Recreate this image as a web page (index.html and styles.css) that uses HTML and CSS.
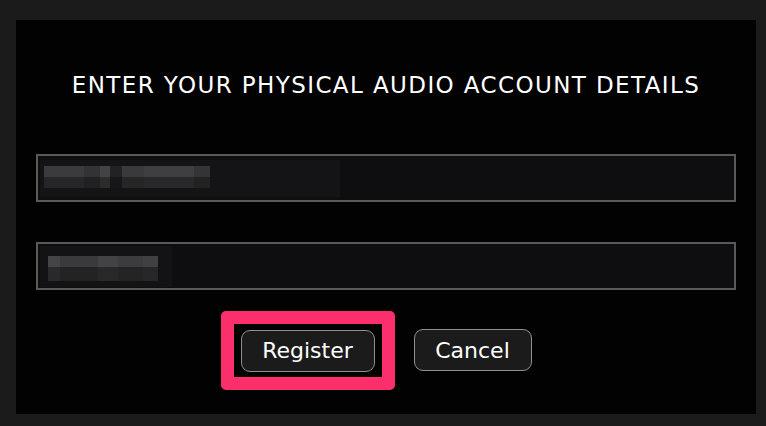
FILE: index.html
```html
<!DOCTYPE html>
<html>
<head>
<meta charset="utf-8">
<link rel="stylesheet" href="styles.css">
</head>
<body>
<div class="panel">
  <h1 class="title">ENTER YOUR PHYSICAL AUDIO ACCOUNT DETAILS</h1>
  <div class="field"><div class="blur blur-email"><div class="band band-email"></div></div></div>
  <div class="field"><div class="blur blur-pass"><div class="band band-pass"></div></div></div>
  <div class="actions">
    <div class="highlight"><button class="btn">Register</button></div>
    <button class="btn">Cancel</button>
  </div>
</div>
</body>
</html>
```
FILE: styles.css
```css
html, body {
  margin: 0;
  padding: 0;
  background: #1b1b1b;
  width: 766px;
  height: 426px;
  overflow: hidden;
}
.panel {
  margin: 20px 0 0 16px;
  width: 740px;
  height: 394px;
  background: #020202;
  box-sizing: border-box;
  padding: 20px 20px 0 20px;
  display: flex;
  flex-direction: column;
  align-items: center;
  font-family: "DejaVu Sans", sans-serif;
}
.title {
  margin: 31px 0 0 0;
  font-size: 23px;
  line-height: 28px;
  font-weight: normal;
  color: #ffffff;
  letter-spacing: 1.4px;
  white-space: nowrap;
}
.field {
  align-self: stretch;
  height: 48px;
  box-sizing: border-box;
  border: 2px solid #5a5a5a;
  background: #0e0e10;
  margin-top: 55px;
  padding: 0 2px;
  display: flex;
  align-items: center;
}
.field + .field { margin-top: 40px; }
.blur {
  position: relative;
  background: #141416;
}
.blur-email { width: 300px; height: 37px; margin-top: 1px; }
.blur-pass { width: 132px; height: 41px; margin-top: 1px; background: #131315; }
.band {
  position: absolute;
}
.band-email {
  left: 4px; top: 6px; width: 166px; height: 22px;
  background:
    linear-gradient(to bottom, rgba(0,0,0,0) 50%, rgba(0,0,0,0.35) 50%),
    linear-gradient(to right, #3b3b3d 0 40px, #333335 40px 56px, #434345 56px 66px, #222224 66px 78px, #3a3a3c 78px 100px, #3f3f41 100px 150px, #343436 150px 166px);
}
.band-pass {
  left: 8px; top: 10px; width: 110px; height: 25px;
  background:
    linear-gradient(to bottom, rgba(0,0,0,0) 44%, rgba(0,0,0,0.4) 44%),
    linear-gradient(to right, #454547 0 12px, #3a3a3c 12px 50px, #434345 50px 70px, #3c3c3e 70px 95px, #404042 95px 110px);
}
.actions {
  margin-top: 39px;
  display: flex;
  align-items: center;
  gap: 40px;
}
.highlight {
  margin: -19px -21px -19px -20px;
  padding: 6px 7px 5px 7px;
  border: 13px solid #fb2f6c;
  border-radius: 5px;
  background: #020202;
  display: flex;
}
.btn {
  height: 42px;
  box-sizing: border-box;
  border: 1.5px solid #8f8f8f;
  border-radius: 9px;
  background: #1b1b1b;
  color: #ffffff;
  font-family: "DejaVu Sans", sans-serif;
  font-size: 22px;
  padding: 0;
  margin: 0;
}
.highlight .btn { width: 134px; }
.actions > .btn { width: 118px; }
```
